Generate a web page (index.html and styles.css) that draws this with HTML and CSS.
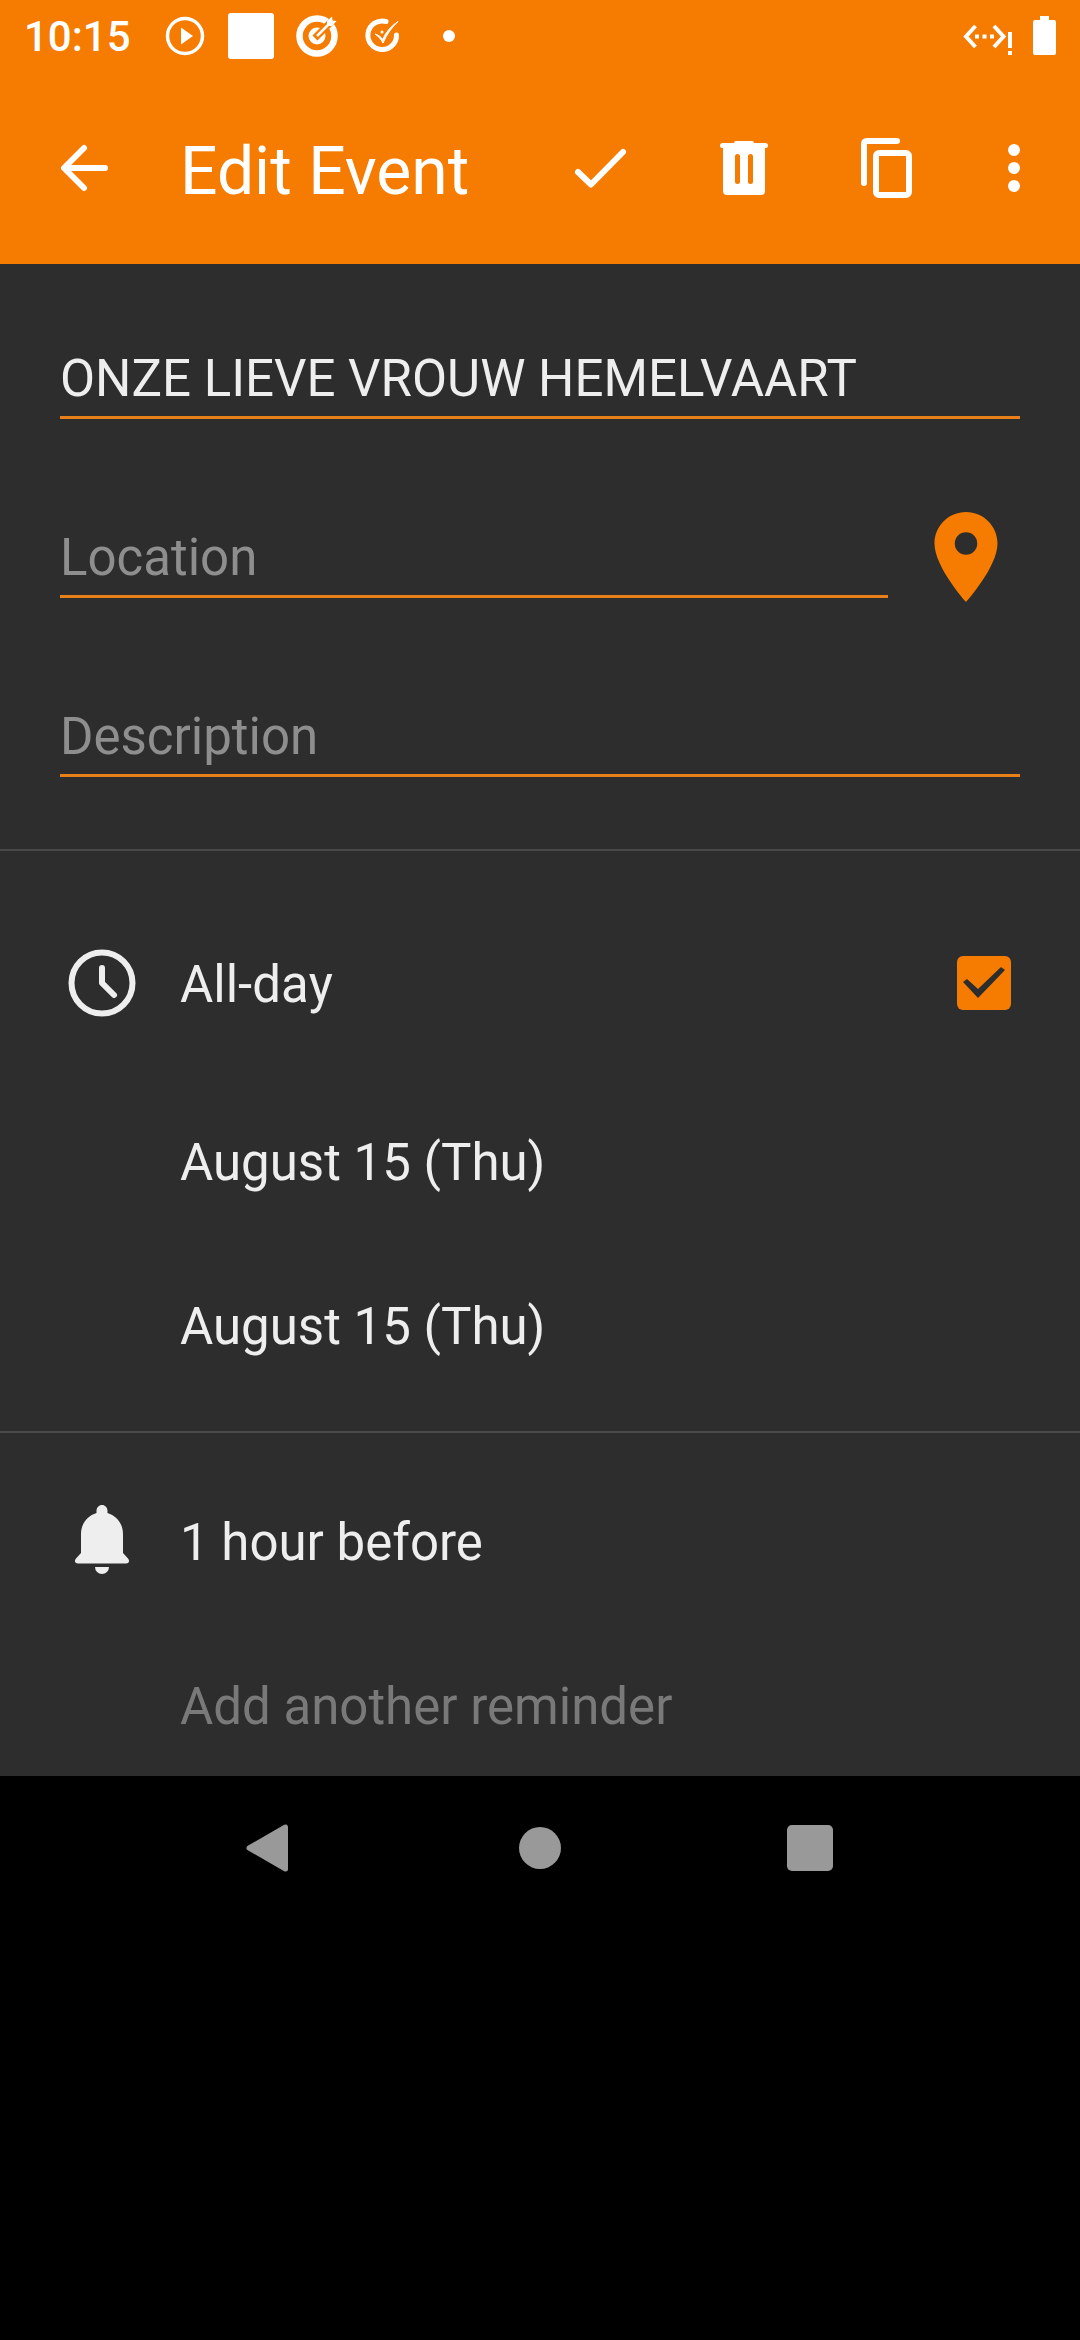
FILE: index.html
```html
<!DOCTYPE html>
<html lang="en">
<head>
<meta charset="utf-8">
<meta name="viewport" content="width=device-width, initial-scale=1">
<title>Edit Event</title>
<link rel="stylesheet" href="styles.css">
</head>
<body>
<header class="top">
  <div class="status">
    <span class="time">10:15</span>
    <div class="notices">
      <svg class="notice" viewBox="0 0 48 48" aria-hidden="true"><circle cx="24" cy="24" r="17.5" fill="none" stroke="#fff" stroke-width="3.5"/><path d="M20 15.500L32 24L20 32.500Z" fill="#fff"/></svg>
      <svg class="notice" viewBox="0 0 48 48" aria-hidden="true"><rect x="1" y="1" width="46" height="46" rx="3" fill="#fff"/></svg>
      <svg class="notice" viewBox="0 0 48 48" aria-hidden="true"><circle cx="24" cy="24" r="17.500" fill="none" stroke="#fff" stroke-width="6.500"/><circle cx="24" cy="24" r="8.500" fill="#fff"/><path d="M22 26L42 6" stroke="#f57c00" stroke-width="7"/><path d="M24 24L38 10" stroke="#fff" stroke-width="2.500"/><path d="M34 14V9L39 4.500L39.500 8.500L43.500 9L39 14Z" fill="#fff"/></svg>
      <svg class="notice" viewBox="0 0 48 48" aria-hidden="true"><path d="M27 9.500A14.300 14.300 0 1 0 37.500 23" fill="none" stroke="#fff" stroke-width="5" stroke-linecap="round"/><path d="M16 22C20 23 22 25 23.500 27.500C27 20 32 14 39 9.500C33 15 28 22 24 31C22 27 19 24 16 22Z" fill="#fff" stroke="#fff"/><circle cx="23" cy="20" r="1.500" fill="#fff"/></svg>
      <svg class="notice" viewBox="0 0 48 48" aria-hidden="true"><circle cx="24" cy="24" r="6" fill="#fff"/></svg>
    </div>
    <svg class="network" viewBox="0 0 60 48" aria-hidden="true"><path d="M15.500 14L6 24.500L15.500 35M34 14L43.500 24.500L34 35" fill="none" stroke="#fff" stroke-width="4"/><path d="M15 22.500h4v4h-4zM22.500 22.500h4v4h-4zM30 22.500h4v4h-4zM48 20h4v16h-4zM48 39h4v4h-4z" fill="#fff"/></svg>
    <svg class="battery" viewBox="0 0 24 48" aria-hidden="true"><path d="M8 4h9v4h5q2 0 2 2v31q0 2-2 2H3q-2 0-2-2V10q0-2 2-2h5z" fill="#fff"/></svg>
  </div>
  <div class="toolbar">
    <button class="tool" type="button" aria-label="Back"><svg class="icon" viewBox="0 0 72 72"><path d="M57 36H17M36 16L16 36L36 56" class="line"/></svg></button>
    <h1 class="title">Edit Event</h1>
    <button class="tool" type="button" aria-label="Save"><svg class="icon" viewBox="0 0 72 72"><path d="M14 40L27 52.500L59 20" class="line"/></svg></button>
    <button class="tool" type="button" aria-label="Delete"><svg class="icon" viewBox="0 0 72 72"><path fill="currentColor" fill-rule="evenodd" d="M28 9H44Q46 9 46 11H57.500A2.500 2.500 0 0 1 57.500 16H57V59Q57 63 53 63H19Q15 63 15 59V16H14.500A2.500 2.500 0 0 1 14.500 11H26Q26 9 28 9ZM27 24.500V49.500A2.500 2.500 0 0 0 32 49.500V24.500A2.500 2.500 0 0 0 27 24.500ZM40 24.500V49.500A2.500 2.500 0 0 0 45 49.500V24.500A2.500 2.500 0 0 0 40 24.500Z"/></svg></button>
    <button class="tool" type="button" aria-label="Duplicate"><svg class="icon" viewBox="0 0 72 72"><path d="M45 9H15Q12 9 12 12V51" class="line"/><rect x="24" y="21" width="33" height="42" rx="3" class="line"/></svg></button>
    <button class="tool tool-more" type="button" aria-label="More options"><svg class="icon" viewBox="0 0 72 72"><g fill="currentColor"><circle cx="36" cy="18" r="6"/><circle cx="36" cy="36" r="6"/><circle cx="36" cy="54" r="6"/></g></svg></button>
  </div>
</header>

<main class="form">
  <section class="section fields">
    <input class="field" type="text" aria-label="Title" value="ONZE LIEVE VROUW HEMELVAART">
    <div class="place">
      <input class="field" type="text" aria-label="Location" placeholder="Location">
      <button class="pin" type="button" aria-label="Show on map"><svg class="pin-icon" viewBox="0 0 24 24"><path fill="currentColor" d="M12 2C8.130 2 5 5.130 5 9c0 5.250 7 13 7 13s7-7.750 7-13c0-3.870-3.130-7-7-7zm0 9.500a2.500 2.500 0 0 1 0-5 2.500 2.500 0 0 1 0 5z"/></svg></button>
    </div>
    <input class="field" type="text" aria-label="Description" placeholder="Description">
  </section>

  <section class="section times">
    <div class="row row-first">
      <svg class="icon" viewBox="0 0 72 72" aria-hidden="true"><circle cx="36" cy="36" r="30.500" class="line"/><path d="M36 21V36L48 48" class="line"/></svg>
      <label class="text check-label" for="all-day">All-day</label>
      <input class="check" type="checkbox" id="all-day" checked>
    </div>
    <div class="row"><button class="text" type="button">August 15 (Thu)</button></div>
    <div class="row"><button class="text" type="button">August 15 (Thu)</button></div>
  </section>

  <section class="section reminders">
    <div class="row">
      <svg class="icon" viewBox="0 0 72 72" aria-hidden="true"><path fill="currentColor" d="M36 0C39 0 41.500 2.500 41.500 6V8C51 11 57 19 57 29V48L62 53.500C64 56 63 58.500 60 58.500H12C9 58.500 8 56 10 53.500L15 48V29C15 19 21 11 30.500 8V6C30.500 2.500 33 0 36 0ZM29 62H43A7 7 0 0 1 29 62Z"/></svg>
      <button class="text" type="button">1 hour before</button>
    </div>
    <div class="row"><button class="text text-dim" type="button">Add another reminder</button></div>
  </section>
</main>

<nav class="system" aria-label="System">
  <button class="key" type="button" aria-label="Back"><svg class="key-icon" viewBox="0 0 72 72"><path d="M51.500 15V57L15 36Z" fill="currentColor" stroke="currentColor" stroke-width="5" stroke-linejoin="round"/></svg></button>
  <button class="key" type="button" aria-label="Home"><svg class="key-icon" viewBox="0 0 72 72"><circle cx="36" cy="36" r="21" fill="currentColor"/></svg></button>
  <button class="key" type="button" aria-label="Recent apps"><svg class="key-icon" viewBox="0 0 72 72"><rect x="13" y="13" width="46" height="46" rx="5" fill="currentColor"/></svg></button>
</nav>
</body>
</html>
```

FILE: styles.css
```css
* {
  box-sizing: border-box;
}

body {
  margin: 0;
  background: #000;
  color: #eee;
  font-family: Roboto, "Liberation Sans", sans-serif;
  font-size: 51px;
  line-height: 60px;
}

button,
input {
  margin: 0;
  padding: 0;
  border: 0;
  border-radius: 0;
  background: none;
  color: inherit;
  font: inherit;
}

svg {
  display: block;
  flex: none;
}

.top {
  background: #f57c00;
  color: #fff;
}

.status {
  display: flex;
  align-items: center;
  gap: 12px;
  height: 72px;
  padding: 0 24px;
}

.time {
  flex: none;
  width: 125px;
  padding-top: 2px;
  font-size: 42px;
  font-weight: 500;
  line-height: 48px;
}

.notices {
  display: flex;
  flex: 1;
  gap: 18px;
}

.notice {
  width: 48px;
  height: 48px;
}

.network {
  width: 60px;
  height: 48px;
}

.battery {
  width: 24px;
  height: 48px;
}

.toolbar {
  display: flex;
  align-items: center;
  height: 192px;
  padding: 0 12px;
}

.tool {
  display: grid;
  flex: none;
  place-items: center;
  width: 144px;
  height: 144px;
}

.tool-more {
  width: 108px;
}

.title {
  flex: 1;
  margin: 0;
  padding: 8px 0 0 24px;
  font-size: 66px;
  font-weight: 400;
  line-height: 78px;
}

.icon {
  width: 72px;
  height: 72px;
}

.line {
  fill: none;
  stroke: currentColor;
  stroke-width: 6px;
  stroke-linecap: round;
  stroke-linejoin: round;
}

.form {
  background: #2d2d2d;
}

.section {
  display: flex;
  flex-direction: column;
  padding: 0 60px;
}

.section + .section {
  border-top: 2px solid #484848;
}

.fields {
  gap: 108px;
  padding-top: 84px;
  padding-bottom: 72px;
}

.field {
  width: 100%;
  min-width: 0;
  height: 71px;
  padding-bottom: 8px;
  border-bottom: 3px solid #e8801a;
  outline: none;
}

.field::placeholder {
  color: #8e8e8e;
  opacity: 1;
}

.place {
  display: flex;
  align-items: flex-start;
  gap: 24px;
}

.pin {
  flex: none;
  margin: -24px 0;
  color: #f57c00;
}

.pin-icon {
  width: 108px;
  height: 108px;
}

.times {
  gap: 92px;
  padding-top: 96px;
  padding-bottom: 70px;
}

.reminders {
  gap: 92px;
  padding-top: 72px;
  padding-bottom: 35px;
}

.row {
  display: grid;
  grid-template-columns: 114px 1fr auto;
  align-items: center;
  min-height: 72px;
  padding-left: 6px;
}

.row-first {
  margin-bottom: 14px;
}

.text {
  grid-column: 2;
  padding-top: 4px;
  text-align: left;
}

.text-dim {
  color: #797979;
}

.check-label {
  font-kerning: none;
}

.check {
  width: 54px;
  height: 54px;
  margin-right: 9px;
  border-radius: 6px;
  background: #f57c00;
  appearance: none;
}

.check:checked::before {
  content: "";
  display: block;
  height: 100%;
  background: #2d2d2d;
  clip-path: polygon(6px 26px, 10px 23px, 21px 33px, 44px 11px, 48px 14px, 21px 42px);
}

.system {
  display: flex;
  justify-content: center;
  height: 144px;
}

.key {
  display: grid;
  place-items: center;
  width: 25%;
  color: #999;
}

.key-icon {
  width: 72px;
  height: 72px;
}
```
